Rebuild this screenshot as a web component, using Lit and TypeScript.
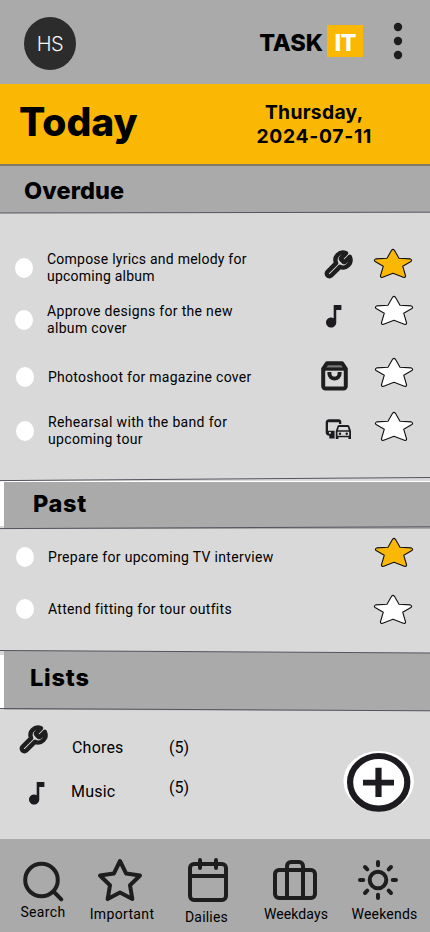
import { LitElement, html, svg, css, nothing } from "lit";
import { customElement, property } from "lit/decorators.js";
import { classMap } from "lit/directives/class-map.js";
import { styleMap } from "lit/directives/style-map.js";

type Glyph = "wrench" | "note" | "bag" | "commute";

interface Task {
  lines: string[];
  height: number;
  inset: number;
  tracking: number;
  starred: boolean;
  starX: number;
  starY: number;
  glyph?: Glyph;
}

const OVERDUE: Task[] = [
  { lines: ["Compose lyrics and melody for", "upcoming album"], height: 52, inset: 0, tracking: 0.23, starred: true, starX: 0, starY: -5, glyph: "wrench" },
  { lines: ["Approve designs for the new", "album cover"], height: 52, inset: 0, tracking: 0.32, starred: false, starX: 1, starY: -10, glyph: "note" },
  { lines: ["Photoshoot for magazine cover"], height: 62, inset: 1, tracking: 0.28, starred: false, starX: 1, starY: -5, glyph: "bag" },
  { lines: ["Rehearsal with the band for", "upcoming tour"], height: 46, inset: 1, tracking: 0.33, starred: false, starX: 1, starY: -5, glyph: "commute" },
];

const PAST: Task[] = [
  { lines: ["Prepare for upcoming TV interview"], height: 52, inset: 1, tracking: 0.31, starred: true, starX: 1, starY: -5 },
  { lines: ["Attend fitting for tour outfits"], height: 52, inset: 1, tracking: 0.31, starred: false, starX: 0, starY: 0 },
];

@customElement("task-glyph")
export class TaskGlyph extends LitElement {
  @property() name: Glyph = "wrench";

  static styles = css`
    :host { display: block; line-height: 0; }
    svg { display: block; overflow: visible; }
  `;

  render() {
    switch (this.name) {
      case "wrench":
        return html`<svg width="30" height="30" viewBox="0 0 24 24" fill="none" stroke="#1e1e1e" stroke-width="3.5" stroke-linecap="round" stroke-linejoin="round">
          <path d="M14.7 6.3a1 1 0 0 0 0 1.4l1.6 1.6a1 1 0 0 0 1.4 0l3.77-3.77a6 6 0 0 1-7.94 7.94l-6.91 6.91a2.12 2.12 0 0 1-3-3l6.91-6.91a6 6 0 0 1 7.94-7.94l-3.76 3.76z"/>
        </svg>`;
      case "note":
        return html`<svg width="15.4" height="22.6" viewBox="6 3 12 18" preserveAspectRatio="none" fill="#1d1b20">
          <path d="M12 3v10.55c-.59-.34-1.27-.55-2-.55-2.21 0-4 1.79-4 4s1.79 4 4 4 4-1.79 4-4V7h4V3h-6z"/>
        </svg>`;
      case "bag":
        return html`<svg width="27" height="30" viewBox="0 0 27 30" fill="none" stroke="#1e1e1e" stroke-width="4" stroke-linejoin="round">
          <path d="M6.4 3.6h14.2v3H5.6z" fill="#777" stroke="none"/>
          <path d="M2.2 7.8 6 2.200h15l3.800 5.600v17.400a2.200 2.200 0 0 1-2.200 2.200H4.400a2.200 2.200 0 0 1-2.200-2.200z"/>
          <path d="M2 8h23" stroke-width="3.4"/>
          <path d="M8.400 11v1.500a5 5 0 0 0 10.200 0V11"/>
        </svg>`;
      default:
        return html`<svg width="27" height="21" viewBox="0 0 27 21" fill="#1d1b20">
          <path fill-rule="evenodd" d="M4 .2h9.500q2.800 0 2.800 2.800v2H14V3.300H3V11.700h6.600v7.800H4.300V16.700Q.7 16.500.7 13.500V3Q.9.6 4 .2zM4.900 12.700a1.100 1.100 0 1 0 0 2.200 1.100 1.100 0 0 0 0-2.200z"/>
          <path fill-rule="evenodd" d="M13.600 6h9.500l1.200 1 1.700 5v8.100h-2.600v-1.800h-10v1.800h-2.600V12l1.700-5zM13.900 7.900l-.9 3.300h10.700l-.9-3.300zM12.500 12.800v3.900h11.700v-3.900z"/>
          <circle cx="15" cy="14.700" r="1.200"/><circle cx="21.700" cy="14.700" r="1.200"/>
        </svg>`;
    }
  }
}

@customElement("task-row")
export class TaskRow extends LitElement {
  @property({ attribute: false }) task!: Task;

  static styles = css`
    :host { display: block; }
    .row {
      display: grid;
      grid-template-columns: 18px 288px 52px 41px;
      align-items: center;
      padding-left: 15px;
    }
    .inset { padding-left: 16px; }
    .check { width: 18px; height: 20px; border-radius: 50%; background: #fff; }
    .text {
      padding-left: 14px;
      font: 400 14px/17px Roboto, "Liberation Sans", sans-serif;
      white-space: nowrap;
      color: #000;
    }
    .glyph.wrench { margin: -6px 0 0 2px; }
    .glyph.note { margin: -8px 0 0 5px; }
    .glyph.bag { margin: -2px 0 0 -1px; }
    .glyph.commute { margin: -4px 0 0 3px; }
    .star { display: block; overflow: visible; }
    .inset .star { margin-left: -1px; }
  `;

  render() {
    const t = this.task;
    return html`
      <div class=${classMap({ row: true, inset: t.inset > 0 })} style=${styleMap({ height: `${t.height}px` })}>
        <span class="check"></span>
        <div class="text" style=${styleMap({ letterSpacing: `${t.tracking}px` })}>
          ${t.lines.map((l) => html`<div>${l}</div>`)}
        </div>
        <div class="glyph ${t.glyph ?? ""}">
          ${t.glyph ? html`<task-glyph .name=${t.glyph}></task-glyph>` : nothing}
        </div>
        <svg class="star" width="41" height="31" viewBox="0 0 41 31"
          style=${styleMap({ transform: `translate(${t.starX}px, ${t.starY}px)` })}>
          <path fill=${t.starred ? "#fab805" : "#fff"} stroke="#111" stroke-width="1.1" stroke-linejoin="round"
            d="M18.700 2.100Q20 .7 21.300 2.100L26 10.300 37.300 10.900Q39.600 11.800 37.900 13.500L29.700 18.200 32.600 28Q32.500 29.800 30.300 29.300L20 25.200 9.700 29.300Q7.500 29.800 7.400 28L10.300 18.200 2.100 13.500Q.4 11.800 2.700 10.900L14 10.300Z"/>
        </svg>
      </div>`;
  }
}

@customElement("app-root")
export class AppRoot extends LitElement {
  static styles = css`
    :host {
      display: flex;
      flex-direction: column;
      height: 932px;
      overflow: hidden;
      background: #d9d9d9;
      color: #000;
      font-family: Roboto, "Liberation Sans", sans-serif;
    }
    * { box-sizing: border-box; }
    svg { display: block; overflow: visible; }
    h1, h2 { margin: 0; font-family: Inter, "Liberation Sans", sans-serif; white-space: nowrap; }

    .top {
      display: flex;
      flex: none;
      align-items: flex-start;
      height: 84px;
      padding: 17px 27px 0 24px;
      background: #aaa;
    }
    .avatar {
      width: 52px;
      height: 53px;
      border-radius: 50%;
      background: #2c2c2c;
      color: #f5f5f5;
      font: 350 20px/54px Inter, "Liberation Sans", sans-serif;
      text-align: center;
      letter-spacing: -0.5px;
    }
    .brand {
      display: flex;
      gap: 4px;
      margin: 8px 0 0 auto;
      font: 800 23.5px/35px Inter, "Liberation Sans", sans-serif;
    }
    .brand-a { display: flex; justify-content: flex-end; width: 64px; letter-spacing: -0.1px; }
    .brand-b { width: 36px; height: 32px; background: #fab805; color: #fff; text-align: center; letter-spacing: -0.8px; }
    .dots { margin: 5px 0 0 30px; }

    .today {
      display: flex;
      flex: none;
      align-items: flex-start;
      justify-content: space-between;
      height: 82px;
      padding: 14px 58px 0 19px;
      background: #fab805;
      border-bottom: 2px solid #827a62;
    }
    .today h1 { font-size: 39px; line-height: 48px; font-weight: 800; }
    .date {
      margin-top: 2px;
      font: 750 19.3px/24px Inter, "Liberation Sans", sans-serif;
      text-align: center;
      letter-spacing: 0.3px;
    }
    .iso { letter-spacing: 0.7px; }

    .band { position: relative; flex: none; }
    .band h2 { position: relative; font-size: 23.5px; line-height: 28px; font-weight: 800; }
    .edges { position: absolute; inset: 0; }
    .b-overdue { height: 47px; padding: 11px 0 0 24px; }
    .b-overdue h2 { letter-spacing: 0.1px; }
    .b-past { height: 49px; padding: 10px 0 0 33px; }
    .b-past h2 { letter-spacing: 0.7px; }
    .b-lists { height: 60px; padding: 14px 0 0 30px; }
    .b-lists h2 { letter-spacing: 0.8px; }

    .tasks { flex: none; }
    .t-overdue { height: 267px; padding-top: 29px; }
    .t-past { height: 121px; padding-top: 2px; }

    .lists {
      display: flex;
      flex: none;
      justify-content: space-between;
      height: 129px;
      padding: 0 14px 0 19px;
      font-size: 16px;
      line-height: 20px;
      letter-spacing: 0.2px;
    }
    .names { display: flex; flex-direction: column; gap: 12px; padding-top: 14px; }
    .list { display: grid; grid-template-columns: 53px 97px 24px; align-items: start; height: 32px; }
    .list .pic { margin: 1px 0 0 -1px; }
    .list .label { margin-top: 14px; }
    .list .count { margin-top: 14px; letter-spacing: 0; }
    .music .pic { margin: 14px 0 0 10px; }
    .music .label { margin: 14px 0 0 -1px; }
    .music .count { margin-top: 10px; }
    .add { padding: 40px 0 0; border: 0; background: none; align-self: flex-start; }

    .nav {
      display: grid;
      grid-template-columns: 85px 74px 94px 85px 92px;
      flex: none;
      height: 93px;
      padding-top: 17px;
      background: #aaa;
      font-size: 14px;
      line-height: 17px;
      letter-spacing: 0.2px;
    }
    .item { display: flex; flex-direction: column; align-items: center; }
    .item span { margin: 2px 0 0 1px; }
    .search span { margin-top: 0; letter-spacing: 0.35px; }
    .important svg { margin: 1px 0 -1px -4px; }
    .important span { margin-left: 0; letter-spacing: 0.35px; }
    .dailies svg { margin-left: 4px; }
    .dailies span { margin-top: 5px; }
    .weekdays svg { margin-left: -1px; }
    .weekdays span { letter-spacing: 0.1px; }
    .weekends svg { margin-left: -12px; }
  `;

  private navItem(name: string, art: unknown) {
    return html`<div class="item ${name.toLowerCase()}">
      <svg width="48" height="48" viewBox="0 0 48 48" fill="none" stroke="#1e1e1e" stroke-width="4" stroke-linecap="round" stroke-linejoin="round">${art}</svg>
      <span>${name}</span>
    </div>`;
  }

  render() {
    return html`
      <header class="top">
        <div class="avatar">HS</div>
        <div class="brand"><span class="brand-a">TASK</span><span class="brand-b">IT</span></div>
        <svg class="dots" width="10" height="40" viewBox="0 0 10 40" fill="#1e1e1e">
          <circle cx="5" cy="5" r="4.2"/><circle cx="5" cy="19" r="4.2"/><circle cx="5" cy="33" r="4.2"/>
        </svg>
      </header>

      <div class="today">
        <h1>Today</h1>
        <div class="date"><div>Thursday,</div><div class="iso">2024-07-11</div></div>
      </div>

      <div class="band b-overdue">
        <svg class="edges" width="430" height="47" viewBox="0 0 430 47">
          <path fill="#aaa" d="M0 0H430V46L0 47z"/>
          <path stroke="#55545f" stroke-width="1" d="M0 47 430 46.2"/>
        </svg>
        <h2>Overdue</h2>
      </div>
      <div class="tasks t-overdue">${OVERDUE.map((t) => html`<task-row .task=${t}></task-row>`)}</div>

      <div class="band b-past">
        <svg class="edges" width="430" height="49" viewBox="0 0 430 49">
          <path fill="#fff" d="M0 1H430V2H4V46H0z"/>
          <path fill="#aaa" d="M4 2H430V49H4z"/>
          <path stroke="#55545f" stroke-width="1" d="M0 .6 430-2.500M0 48.600 430 46.800"/>
        </svg>
        <h2>Past</h2>
      </div>
      <div class="tasks t-past">${PAST.map((t) => html`<task-row .task=${t}></task-row>`)}</div>

      <div class="band b-lists">
        <svg class="edges" width="430" height="60" viewBox="0 0 430 60">
          <path fill="#fff" d="M0 5H4V58.500H0z"/>
          <path fill="#aaa" d="M4 .3 430 3V60.800L4 59.800z"/>
          <path stroke="#55545f" stroke-width="1" d="M0 .5 430 3M0 58.500 430 60.800"/>
        </svg>
        <h2>Lists</h2>
      </div>
      <div class="lists">
        <div class="names">
          <div class="list">
            <task-glyph class="pic" .name=${"wrench" as Glyph}></task-glyph>
            <span class="label">Chores</span><span class="count">(5)</span>
          </div>
          <div class="list music">
            <task-glyph class="pic" .name=${"note" as Glyph}></task-glyph>
            <span class="label">Music</span><span class="count">(5)</span>
          </div>
        </div>
        <button class="add" aria-label="Add">
          <svg width="73" height="64" viewBox="0 0 73 64">
            <ellipse cx="35.7" cy="31" rx="35.3" ry="30" fill="#fff"/>
            <ellipse cx="35.7" cy="32.3" rx="28.6" ry="26.3" fill="#fff" stroke="#1d1b20" stroke-width="6.2"/>
            <path fill="#1d1b20" d="M32.400 17.800h6.200v11.900h12.400v5.700H38.600V47h-6.200V35.400H20V29.700h12.400z"/>
          </svg>
        </button>
      </div>

      <nav class="nav">
        ${this.navItem("Search", svg`<circle cx="22.5" cy="24" r="16.3"/><path d="M35 36l7.300 7.300"/>`)}
        ${this.navItem("Important", svg`<path d="M24 4l6.180 12.520L44 18.540l-10 9.740 2.360 13.760L24 35.540l-12.360 6.500L14 28.280 4 18.540l13.820-2.020z"/>`)}
        ${this.navItem("Dailies", svg`<rect x="6" y="8" width="36" height="36" rx="4"/><path d="M32 4v8M16 4v8M6 20h36"/>`)}
        ${this.navItem("Weekdays", svg`<rect x="4" y="14" width="40" height="28" rx="4"/><path d="M32 42V10a4 4 0 0 0-4-4h-8a4 4 0 0 0-4 4v32"/>`)}
        ${this.navItem("Weekends", svg`<circle cx="24" cy="24" r="8.3"/><path d="M24 6v3.300M24 38.700V42M6 24h3.300M38.700 24H42M11 11l2.300 2.300M34.700 34.700 37 37M11 37l2.300-2.300M34.700 13.300 37 11"/>`)}
      </nav>`;
  }
}
